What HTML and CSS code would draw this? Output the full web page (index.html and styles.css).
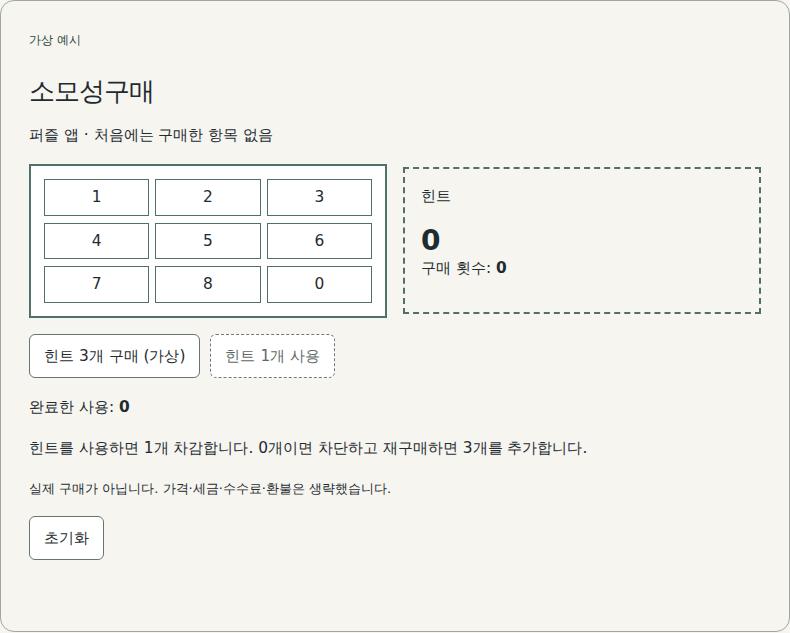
FILE: index.html
```html
<!DOCTYPE html>
<html lang="ko">
<head>
<meta charset="utf-8">
<title>소모성구매</title>
<link rel="stylesheet" href="styles.css">
</head>
<body>
<main class="card">
  <p class="eyebrow">가상 예시</p>
  <h1 class="title">소모성구매</h1>
  <p class="subtitle">퍼즐 앱 · 처음에는 구매한 항목 없음</p>

  <div class="panels">
    <div class="keypad">
      <button class="key">1</button>
      <button class="key">2</button>
      <button class="key">3</button>
      <button class="key">4</button>
      <button class="key">5</button>
      <button class="key">6</button>
      <button class="key">7</button>
      <button class="key">8</button>
      <button class="key">0</button>
    </div>
    <div class="hint">
      <p class="hint-label">힌트</p>
      <p class="hint-count">0</p>
      <p class="hint-sub">구매 횟수: <b>0</b></p>
    </div>
  </div>

  <div class="actions">
    <button class="btn">힌트 3개 구매 (가상)</button>
    <button class="btn btn-dashed">힌트 1개 사용</button>
  </div>

  <p class="line done">완료한 사용: <b>0</b></p>
  <p class="line rule">힌트를 사용하면 1개 차감합니다. 0개이면 차단하고 재구매하면 3개를 추가합니다.</p>
  <p class="note">실제 구매가 아닙니다. 가격·세금·수수료·환불은 생략했습니다.</p>

  <button class="btn reset">초기화</button>
</main>
</body>
</html>
```

FILE: styles.css
```css
* { box-sizing: border-box; }

html, body {
  margin: 0;
  padding: 0;
  background: #f6f5f0;
}

body {
  font-family: "DejaVu Sans", sans-serif;
  color: #1f2b30;
  font-size: 15.4px;
}

.card {
  width: 790px;
  height: 632px;
  border: 1px solid #9ea7a2;
  border-radius: 14px;
  background: #f6f5f0;
  padding: 28px;
  display: flex;
  flex-direction: column;
  align-items: flex-start;
}

p { margin: 0; }

.eyebrow {
  font-size: 12px;
  line-height: 22px;
  color: #2c4843;
}

.title {
  margin: 23px 0 0;
  font-size: 26px;
  font-weight: normal;
  letter-spacing: -1px;
  line-height: 34px;
}

.subtitle {
  margin-top: 16px;
  line-height: 22px;
}

.panels {
  margin-top: 18px;
  width: 100%;
  display: grid;
  grid-template-columns: 1fr 1fr;
  column-gap: 16px;
  align-items: center;
}

.keypad {
  border: 2px solid #4e7268;
  background: #fff;
  padding: 13px;
  display: grid;
  grid-template-columns: repeat(3, 1fr);
  column-gap: 6px;
  row-gap: 7px;
}

.key {
  height: 36.5px;
  border: 1px solid #4e7268;
  background: #fff;
  font-family: inherit;
  font-size: 15.4px;
  color: #1f2b30;
  padding: 0;
  border-radius: 0;
}

.hint {
  border: 2px dashed #4e7268;
  padding: 16px 16px 33px;
}

.hint-label {
  line-height: 22px;
}

.hint-count {
  margin-top: 18px;
  font-size: 28px;
  font-weight: bold;
  line-height: 32px;
}

.hint-sub {
  line-height: 22px;
}

.actions {
  margin-top: 16px;
  display: flex;
  gap: 10px;
}

.btn {
  font-family: inherit;
  font-size: 15.4px;
  line-height: 22px;
  color: #1f2b30;
  background: #fff;
  border: 1px solid #66756f;
  border-radius: 6px;
  padding: 10px 14px;
  height: 44px;
}

.btn-dashed {
  border: 1px dashed #6f7a77;
  color: #5e6966;
}

.line {
  line-height: 22px;
}

.done { margin-top: 18px; }
.rule { margin-top: 19px; }

.note {
  margin-top: 20px;
  font-size: 13px;
  line-height: 20px;
}

.reset {
  margin-top: 17px;
}
```
